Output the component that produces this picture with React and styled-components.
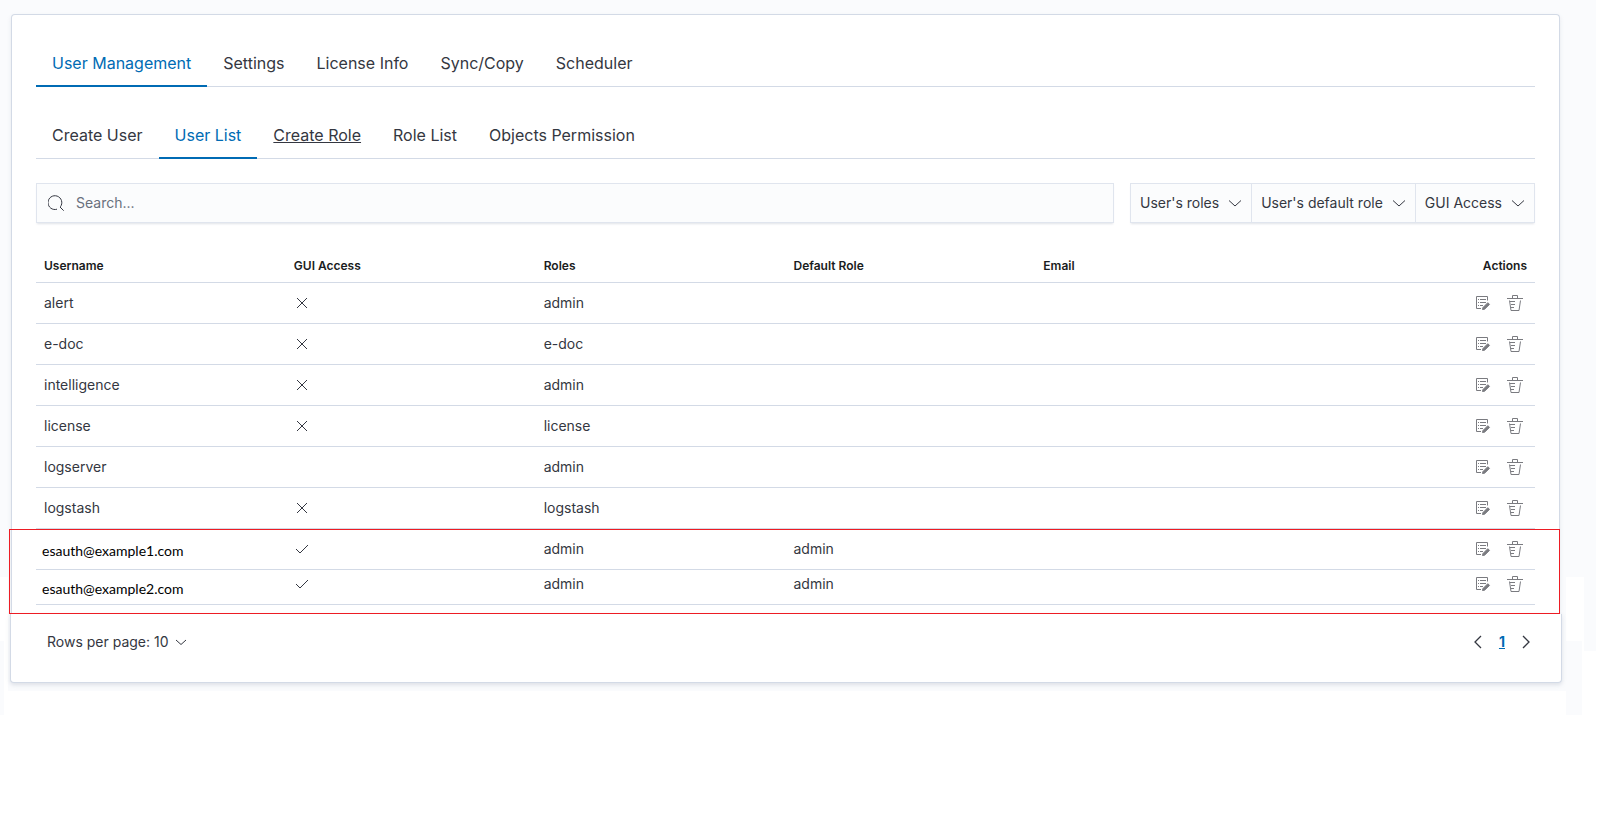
import styled, { createGlobalStyle } from 'styled-components';

const users = [
  { name: 'alert', gui: 'no', role: 'admin' },
  { name: 'e-doc', gui: 'no', role: 'e-doc' },
  { name: 'intelligence', gui: 'no', role: 'admin' },
  { name: 'license', gui: 'no', role: 'license' },
  { name: 'logserver', gui: '', role: 'admin' },
  { name: 'logstash', gui: 'no', role: 'logstash' },
  { name: 'esauth@example1.com', gui: 'yes', role: 'admin', defaultRole: 'admin', external: true },
  { name: 'esauth@example2.com', gui: 'yes', role: 'admin', defaultRole: 'admin', external: true, short: true },
];

const mainTabs = ['User Management', 'Settings', 'License Info', 'Sync/Copy', 'Scheduler'];
const subTabs = ['Create User', 'User List', 'Create Role', 'Role List', 'Objects Permission'];
const filters = ["User's roles", "User's default role", 'GUI Access'];

function SearchIcon() {
  return (
    <Icon viewBox="0 0 16 16">
      <path d="M9 14.2A6.900 6.900 0 1 1 12.400 11.800M12 12l3.700 3.700" />
    </Icon>
  );
}

function Arrow({ d }) {
  return (
    <Icon viewBox="0 0 16 16">
      <path d={d} />
    </Icon>
  );
}

function EditIcon() {
  return (
    <Icon viewBox="0 0 16 16">
      <path d="M6 13.5H1.5v-12h11v4M3 4.500h1M5 4.500h6M3 7.500h1M5 7.500h6M3 10.500h1M5 10.500h3" />
      <path d="M7.500 14.500l.5-2 4.800-4.800 1.700 1.700-4.900 4.800z" fill="currentColor" />
    </Icon>
  );
}

function TrashIcon() {
  return (
    <Icon viewBox="0 0 16 16">
      <path d="M0 3.5h16M5.500 3.500v-3h5v3M2.500 5.500l1.500 10h8l1.500-10M3 6.500h5M4 9.500h4M4 12.500h3" />
    </Icon>
  );
}

function App() {
  return (
    <Page>
      <GlobalStyle />
      <Panel>
        <Tabs>
          {mainTabs.map((tab) => (
            <Tab key={tab} $active={tab === 'User Management'}>{tab}</Tab>
          ))}
        </Tabs>
        <Tabs>
          {subTabs.map((tab) => (
            <Tab key={tab} $active={tab === 'User List'} $underline={tab === 'Create Role'}>{tab}</Tab>
          ))}
        </Tabs>
        <Toolbar>
          <SearchBox>
            <SearchIcon />
            <input type="search" placeholder="Search..." aria-label="Search users" />
          </SearchBox>
          <FilterGroup>
            {filters.map((filter) => (
              <FilterButton key={filter}>
                {filter}
                <Arrow d="M2 5.500l6 5.500 6-5.500" />
              </FilterButton>
            ))}
          </FilterGroup>
        </Toolbar>
        <TableWrap>
          <Table>
            <thead>
              <tr>
                <th>Username</th>
                <th>GUI Access</th>
                <th>Roles</th>
                <th>Default Role</th>
                <th>Email</th>
                <th>Actions</th>
              </tr>
            </thead>
            <tbody>
              {users.map((user) => (
                <Row key={user.name} $short={user.short}>
                  <NameCell $external={user.external}>{user.name}</NameCell>
                  <td>
                    {user.gui === 'no' && <Arrow d="M3 3l10 10M13 3L3 13" />}
                    {user.gui === 'yes' && <Arrow d="M2 8l4 4 8-8" />}
                  </td>
                  <td>{user.role}</td>
                  <td>{user.defaultRole}</td>
                  <td />
                  <td>
                    <Actions>
                      <IconButton aria-label={`Edit ${user.name}`}><EditIcon /></IconButton>
                      <IconButton aria-label={`Delete ${user.name}`}><TrashIcon /></IconButton>
                    </Actions>
                  </td>
                </Row>
              ))}
            </tbody>
          </Table>
          <Highlight />
        </TableWrap>
      </Panel>
      <Footer>
        <RowsButton>
          Rows per page: 10
          <Arrow d="M3 6l5 4.500 5-4.500" />
        </RowsButton>
        <Pagination>
          <IconButton aria-label="Previous page"><Arrow d="M10 2l-6 6 6 6" /></IconButton>
          <a href="#1">1</a>
          <IconButton aria-label="Next page"><Arrow d="M6 2l6 6-6 6" /></IconButton>
        </Pagination>
      </Footer>
    </Page>
  );
}

const GlobalStyle = createGlobalStyle`
  * {
    box-sizing: border-box;
  }
  body {
    margin: 0;
    background: #fff;
    color: #343741;
    font-family: Inter, "Liberation Sans", sans-serif;
    font-size: 14px;
    line-height: 24px;
  }
  button, input {
    font: inherit;
    color: inherit;
    border: none;
    background: none;
    padding: 0;
  }
  button {
    cursor: pointer;
  }
`;

/* pale backdrop, stepped away towards the bottom corners */
const Page = styled.div`
  --tint: linear-gradient(#fafbfd, #fafbfd);
  padding: 14px 46px 32px 10px;
  background:
    var(--tint) 0 0 / calc(100% - 12px) 577px no-repeat,
    var(--tint) right 12px top 577px / 12px 74px no-repeat,
    var(--tint) right 26px bottom 0 / 16px 74px no-repeat,
    var(--tint) right 42px bottom 24px / calc(100% - 50px) 114px no-repeat,
    var(--tint) 0 100% / 4px 74px no-repeat;
`;

const Icon = styled.svg`
  display: block;
  flex: none;
  width: 16px;
  height: 16px;
  fill: none;
  stroke: currentColor;
`;

const Panel = styled.main`
  margin: 0 2px 0 1px;
  padding: 24px 24px 0;
  background: #fff;
  border: 1px solid #d3dae6;
  border-bottom: none;
  border-radius: 4px 4px 0 0;
  box-shadow: 0 2px 4px rgba(152, 162, 179, 0.2);
`;

const Tabs = styled.nav`
  display: flex;
  margin-bottom: 24px;
  box-shadow: inset 0 -1px #d3dae6;
`;

const Tab = styled.button`
  padding: 12px 16px;
  font-size: 16px;
  color: ${(props) => (props.$active ? '#006bb4' : '#343741')};
  box-shadow: ${(props) => (props.$active ? 'inset 0 -2px #006bb4' : 'none')};
  text-decoration: ${(props) => (props.$underline ? 'underline' : 'none')};
`;

const Toolbar = styled.div`
  display: flex;
  gap: 16px;
  margin-bottom: 24px;
`;

const SearchBox = styled.label`
  display: flex;
  flex: 1;
  align-items: center;
  gap: 12px;
  height: 40px;
  padding: 0 11px;
  background: #fbfcfd;
  border: 1px solid #e0e5ee;
  box-shadow: 0 2px 2px -1px rgba(152, 162, 179, 0.3);

  input {
    flex: 1;
    outline: none;
  }
  input::placeholder {
    color: #69707d;
    opacity: 1;
  }
`;

const FilterGroup = styled.div`
  display: flex;
  border: 1px solid #e0e5ee;
  box-shadow: 0 2px 2px -1px rgba(152, 162, 179, 0.3);
`;

const FilterButton = styled.button`
  display: flex;
  align-items: center;
  gap: 8px;
  padding: 0 8px 0 9px;
  background: #fbfcfd;

  & + & {
    border-left: 1px solid #e0e5ee;
  }
`;

const TableWrap = styled.div`
  position: relative;
  padding-bottom: 9px;
`;

const Table = styled.table`
  width: 100%;
  table-layout: fixed;
  border-collapse: separate;
  border-spacing: 0;

  th {
    height: 36px;
    padding: 2px 8px 0;
    font-size: 12px;
    font-weight: 600;
    text-align: left;
    color: #1a1c21;
    border-bottom: 1px solid #d3dae6;
  }
  th:last-child {
    text-align: right;
  }
`;

const Row = styled.tr`
  td {
    height: ${(props) => (props.$short ? '35px' : '41px')};
    padding: ${(props) => (props.$short ? '0 8px 6px' : '0 8px')};
    border-bottom: 1px solid #d3dae6;
  }
`;

const NameCell = styled.td`
  ${(props) => props.$external && `
    && {
      padding: 4px 6px 0;
      color: #000;
      font-family: Lato, "Liberation Sans", sans-serif;
    }
  `}
`;

const Actions = styled.div`
  display: flex;
  justify-content: flex-end;
  gap: 16px;
  padding-right: 4px;
  color: #7a7b80;
`;

const IconButton = styled.button`
  display: block;
`;

/* frame over the two rows that come from the external domains */
const Highlight = styled.div`
  position: absolute;
  bottom: 0;
  left: -27px;
  right: -25px;
  height: 85px;
  border: 1px solid #ed1c24;
`;

const Footer = styled.footer`
  display: flex;
  align-items: center;
  justify-content: space-between;
  height: 69px;
  padding: 0 28px 12px 36px;
  background: #fff;
  border: 1px solid #d3dae6;
  border-top: none;
  border-radius: 0 0 4px 4px;
  box-shadow: 0 2px 4px rgba(152, 162, 179, 0.3);
`;

const RowsButton = styled.button`
  display: flex;
  align-items: center;
  gap: 4px;
`;

const Pagination = styled.nav`
  display: flex;
  align-items: center;
  gap: 12px;

  svg {
    stroke-width: 1.3;
  }
  a {
    color: #006bb4;
    font-weight: 700;
  }
`;

export default App;
